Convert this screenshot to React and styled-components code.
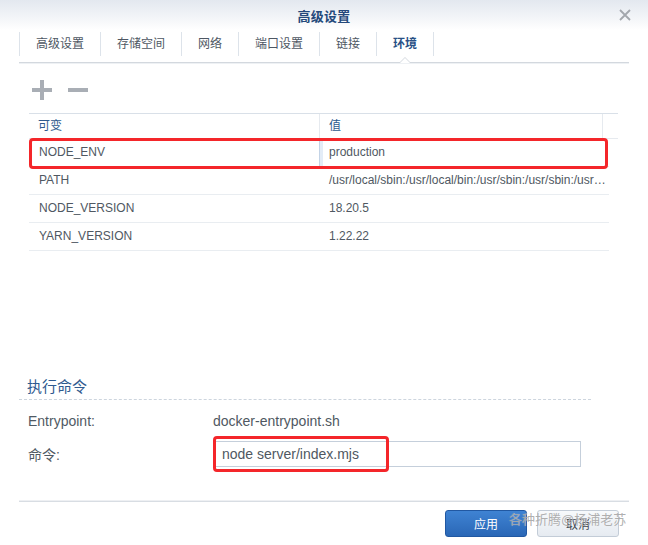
import React from 'react';
import styled, { createGlobalStyle } from 'styled-components';

const GlobalStyle = createGlobalStyle`
  html, body {
    margin: 0;
    padding: 0;
    background: #fff;
  }
  body {
    font-family: "Liberation Sans", "Noto Sans CJK SC", sans-serif;
    font-size: 12px;
    color: #505a64;
  }
`;

const tabs = ['高级设置', '存储空间', '网络', '端口设置', '链接', '环境'];

const envRows = [
  { name: 'NODE_ENV', value: 'production', editing: true },
  { name: 'PATH', value: '/usr/local/sbin:/usr/local/bin:/usr/sbin:/usr/sbin:/usr/bin:/sbin:/bin' },
  { name: 'NODE_VERSION', value: '18.20.5' },
  { name: 'YARN_VERSION', value: '1.22.22' },
];

const App = () => {
  return (
    <>
      <GlobalStyle />
      <Dialog>
        <TitleBar>
          <span />
          <Title>高级设置</Title>
          <CloseButton aria-label="关闭">
            <svg width="12" height="12" viewBox="0 0 12 12">
              <path d="M1 1 L11 11 M11 1 L1 11" stroke="#a3a7ad" strokeWidth="1.8" fill="none" />
            </svg>
          </CloseButton>
        </TitleBar>

        <TabBar>
          {tabs.map((t, i) => (
            <Tab key={t} $active={i === tabs.length - 1} $first={i === 0}>
              {t}
            </Tab>
          ))}
        </TabBar>

        <Toolbar>
          <IconButton aria-label="添加">
            <svg width="20" height="20" viewBox="0 0 20 20">
              <path d="M10 0 V20 M0 10 H20" stroke="#a9aeb5" strokeWidth="4" fill="none" />
            </svg>
          </IconButton>
          <IconButton aria-label="删除">
            <svg width="20" height="20" viewBox="0 0 20 20">
              <path d="M0 10 H20" stroke="#a9aeb5" strokeWidth="4" fill="none" />
            </svg>
          </IconButton>
        </Toolbar>

        <Table>
          <HeadRow>
            <HeadCell>可变</HeadCell>
            <HeadCell>值</HeadCell>
            <HeadCell />
          </HeadRow>
          <Body>
            {envRows.map((r) => (
              <Row key={r.name}>
                <Cell>{r.name}</Cell>
                <Cell $editing={r.editing}>{r.value}</Cell>
                {r.editing && <Mark />}
              </Row>
            ))}
          </Body>
        </Table>

        <Spacer />

        <Section>
          <SectionTitle>执行命令</SectionTitle>
          <FormRow>
            <Label>Entrypoint:</Label>
            <Value>docker-entrypoint.sh</Value>
          </FormRow>
          <FormRow>
            <Label>命令:</Label>
            <InputWrap>
              <TextInput defaultValue="node server/index.mjs" />
              <InputMark />
            </InputWrap>
          </FormRow>
        </Section>

        <Footer>
          <PrimaryButton>应用</PrimaryButton>
          <SecondaryButton>取消</SecondaryButton>
          <Watermark>各种折腾@杨浦老苏</Watermark>
        </Footer>
      </Dialog>
    </>
  );
};

const Dialog = styled.div`
  width: 648px;
  height: 545px;
  display: flex;
  flex-direction: column;
  background: #fff;
  overflow: hidden;
`;

const TitleBar = styled.div`
  height: 30px;
  display: grid;
  grid-template-columns: 1fr auto 1fr;
  align-items: center;
  background: linear-gradient(to bottom, #e3e8ef 0%, #f3f5f8 60%, #ffffff 100%);
`;

const Title = styled.div`
  font-size: 13px;
  font-weight: bold;
  color: #24497b;
  letter-spacing: 0.2px;
`;

const CloseButton = styled.div`
  justify-self: end;
  width: 12px;
  height: 12px;
  margin-right: 17px;
  display: flex;
`;

const TabBar = styled.div`
  height: 32px;
  margin: 0 19px;
  display: flex;
  align-items: flex-start;
  border-bottom: 1px solid #d3d8de;
  box-shadow: 0 1px 0 #eef1f4;
`;

const Tab = styled.div`
  position: relative;
  margin-top: 2px;
  height: 24px;
  line-height: 24px;
  padding: 0 16px;
  border-right: 1px solid #dde3ea;
  border-left: ${(p) => (p.$first ? '1px solid #dde3ea' : 'none')};
  color: ${(p) => (p.$active ? '#2a5186' : '#4e5763')};
  font-weight: ${(p) => (p.$active ? 'bold' : 'normal')};
  white-space: nowrap;

  ${(p) =>
    p.$active &&
    `
    &::before, &::after {
      content: '';
      position: absolute;
      left: 50%;
      width: 0;
      height: 0;
      border-style: solid;
      border-color: transparent;
    }
    &::before {
      bottom: -7px;
      margin-left: -6px;
      border-width: 0 6px 6px 6px;
      border-bottom-color: #d3d8de;
    }
    &::after {
      bottom: -7px;
      margin-left: -5px;
      border-width: 0 5px 5px 5px;
      border-bottom-color: #fff;
    }
  `}
`;

const Toolbar = styled.div`
  height: 50px;
  display: flex;
  align-items: flex-start;
  gap: 16px;
  padding: 17px 0 0 32px;
  box-sizing: border-box;
`;

const IconButton = styled.div`
  width: 20px;
  height: 20px;
  display: flex;
`;

const Table = styled.div`
  margin: 0 30px 0 29px;
`;

const HeadRow = styled.div`
  display: grid;
  grid-template-columns: 290px 1fr 16px;
  height: 26px;
  border-top: 1px solid #d9e0e8;
  border-bottom: 1px solid #e6eaef;
  box-sizing: border-box;
`;

const HeadCell = styled.div`
  padding-left: 9px;
  line-height: 24px;
  color: #2d5a8e;
  & + & {
    border-left: 1px solid #e6eaef;
  }
`;

const Body = styled.div`
  padding-right: 9px;
`;

const Row = styled.div`
  position: relative;
  display: grid;
  grid-template-columns: 290px 1fr;
  height: 28px;
  border-bottom: 1px solid #e9edf1;
  box-sizing: border-box;
`;

const Cell = styled.div`
  padding-left: 10px;
  line-height: 27px;
  white-space: nowrap;
  overflow: hidden;
  text-overflow: ellipsis;
  color: #4f5862;
  ${(p) =>
    p.$editing &&
    `
    border-left: 1px solid #c3d3e6;
    box-shadow: inset 3px 0 0 #e3ecf7;
    padding-left: 9px;
  `}
`;

const Mark = styled.div`
  position: absolute;
  top: -1px;
  left: 0;
  right: 1px;
  bottom: -3px;
  border: 3px solid #f4262a;
  border-radius: 4px;
  pointer-events: none;
`;

const Spacer = styled.div`
  flex: 1;
`;

const Section = styled.div`
  margin: 0 57px 0 19px;
  padding-bottom: 34px;
  font-size: 14px;
`;

const SectionTitle = styled.div`
  font-size: 15px;
  line-height: 24px;
  padding-left: 8px;
  color: #2f5a8f;
  border-bottom: 1px dashed #cdd5de;
  margin-bottom: 8px;
`;

const FormRow = styled.div`
  display: grid;
  grid-template-columns: 185px 1fr;
  align-items: center;
  min-height: 26px;
  padding-left: 9px;
  & + & {
    margin-top: 7px;
  }
`;

const Label = styled.div`
  color: #505a64;
`;

const Value = styled.div`
  color: #4f5862;
`;

const InputWrap = styled.div`
  position: relative;
  width: 367px;
  height: 26px;
  margin-left: 1px;
`;

const TextInput = styled.input`
  width: 100%;
  height: 100%;
  box-sizing: border-box;
  border: 1px solid #c5cfdb;
  padding: 0 7px;
  font-family: "Liberation Sans", "Noto Sans CJK SC", sans-serif;
  font-size: 14px;
  color: #4f5862;
  outline: none;
  background: #fff;
`;

const InputMark = styled.div`
  position: absolute;
  left: -1px;
  top: -5px;
  width: 176px;
  height: 36px;
  box-sizing: border-box;
  border: 3px solid #f4262a;
  border-radius: 4px;
  pointer-events: none;
`;

const Footer = styled.div`
  position: relative;
  margin: 0 19px;
  height: 44px;
  border-top: 1px solid #d8dde3;
  box-shadow: 0 -1px 0 #eef0f3;
  box-sizing: border-box;
  display: flex;
  justify-content: flex-end;
  align-items: flex-start;
  gap: 10px;
  padding: 8px 10px 0 0;
`;

const BaseButton = styled.div`
  width: 82px;
  height: 27px;
  box-sizing: border-box;
  border-radius: 3px;
  display: flex;
  align-items: center;
  justify-content: center;
  font-size: 12px;
`;

const PrimaryButton = styled(BaseButton)`
  background: linear-gradient(to bottom, #3f83d3 0%, #2a67b6 100%);
  border: 1px solid #2158a2;
  color: #fff;
`;

const SecondaryButton = styled(BaseButton)`
  background: linear-gradient(to bottom, #f7f9fb 0%, #e6ebf1 100%);
  border: 1px solid #c3ccd7;
  color: #3d4650;
`;

const Watermark = styled.div`
  position: absolute;
  left: 490px;
  top: 8px;
  font-size: 13px;
  line-height: 20px;
  color: rgba(165, 165, 165, 0.9);
  text-shadow: 0 0 1px rgba(255, 255, 255, 0.5);
  white-space: nowrap;
  pointer-events: none;
`;

export default App;
